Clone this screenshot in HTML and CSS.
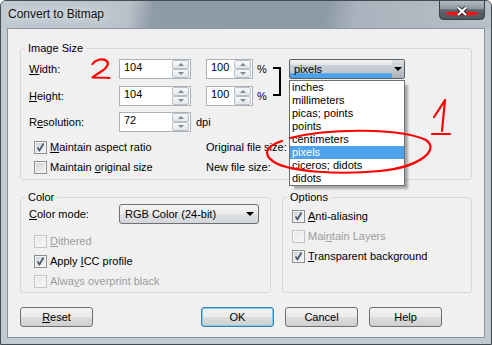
FILE: index.html
```html
<!DOCTYPE html>
<html lang="en">
  <head>
    <meta charset="UTF-8" />
    <title>Convert to Bitmap</title>
    <link rel="stylesheet" href="styles.css">
  </head>
  <body>
    <div class="window">
      <div class="titlebar">
        <span class="title">Convert to Bitmap</span>
        <span class="close">
          <svg width="46" height="19" viewBox="0 0 46 19">
            <defs>
              <linearGradient id="closeBg" x1="0" y1="0" x2="0" y2="1">
                <stop offset="0" stop-color="#b4bbc2" />
                <stop offset="0.42" stop-color="#8d959d" />
                <stop offset="0.48" stop-color="#5d656d" />
                <stop offset="1" stop-color="#4c545c" />
              </linearGradient>
            </defs>
            <path d="M0.5 0 V14.5 Q0.5 18.5 4.5 18.5 H41.5 Q45.5 18.5 45.5 14.5 V0" fill="url(#closeBg)" stroke="#39414a" />
            <ellipse cx="23" cy="12.5" rx="17" ry="2" fill="#ff1010" />
            <path d="M19 6.5 L27 14 M27 6.5 L19 14" stroke="#2a3036" stroke-width="4" />
            <path d="M19 6.5 L27 14 M27 6.5 L19 14" stroke="#ffffff" stroke-width="2.2" />
          </svg>
        </span>
      </div>

      <div class="client">
        <fieldset class="group size-group">
          <legend>Image Size</legend>
          <div class="size-grid">
            <span class="lbl"><u>W</u>idth:</span>
            <span class="spin w-num"><span class="val">104</span><span class="arrows"><i class="up"></i><i class="down"></i></span></span>
            <span class="spin w-pct"><span class="val">100</span><span class="arrows"><i class="up"></i><i class="down"></i></span></span>
            <span class="pct">%</span>
            <span class="bracket"></span>
            <div class="combo">
              <span class="combo-text">pixels</span>
              <span class="combo-btn"></span>
              <ul class="droplist">
                <li>inches</li>
                <li>millimeters</li>
                <li>picas; points</li>
                <li>points</li>
                <li>centimeters</li>
                <li class="sel">pixels</li>
                <li>ciceros; didots</li>
                <li>didots</li>
              </ul>
            </div>

            <span class="lbl"><u>H</u>eight:</span>
            <span class="spin w-num"><span class="val">104</span><span class="arrows"><i class="up"></i><i class="down"></i></span></span>
            <span class="spin w-pct"><span class="val">100</span><span class="arrows"><i class="up"></i><i class="down"></i></span></span>
            <span class="pct">%</span>

            <span class="lbl">R<u>e</u>solution:</span>
            <span class="with-unit">
              <span class="spin w-num"><span class="val">72</span><span class="arrows"><i class="up"></i><i class="down"></i></span></span>
              <span>dpi</span>
            </span>
          </div>

          <div class="size-checks">
            <label class="check">
              <span class="box"><svg width="11" height="11" viewBox="0 0 11 11"><path d="M2.5 5.5 L4.5 8.5 L8.5 1.5" fill="none" stroke="#4a5766" stroke-width="1.7" /></svg></span>
              <span><u>M</u>aintain aspect ratio</span>
            </label>
            <span class="info">Original file size:</span>
            <label class="check">
              <span class="box"></span>
              <span>Maintain <u>o</u>riginal size</span>
            </label>
            <span class="info">New file size:</span>
          </div>
        </fieldset>

        <div class="lower">
          <fieldset class="group color-group">
            <legend>Color</legend>
            <div class="mode-row">
              <span class="mode-lbl"><u>C</u>olor mode:</span>
              <span class="select">
                <span class="select-text">RGB Color (24-bit)</span>
                <span class="select-arrow"></span>
              </span>
            </div>
            <div class="color-checks">
              <label class="check off">
                <span class="box"></span>
                <span><u>D</u>ithered</span>
              </label>
              <label class="check">
                <span class="box"><svg width="11" height="11" viewBox="0 0 11 11"><path d="M2.5 5.5 L4.5 8.5 L8.5 1.5" fill="none" stroke="#4a5766" stroke-width="1.7" /></svg></span>
                <span>Apply <u>I</u>CC profile</span>
              </label>
              <label class="check off">
                <span class="box"></span>
                <span>Alwa<u>y</u>s overprint black</span>
              </label>
            </div>
          </fieldset>

          <fieldset class="group options-group">
            <legend>Options</legend>
            <div class="option-checks">
              <label class="check">
                <span class="box"><svg width="11" height="11" viewBox="0 0 11 11"><path d="M2.5 5.5 L4.5 8.5 L8.5 1.5" fill="none" stroke="#4a5766" stroke-width="1.7" /></svg></span>
                <span><u>A</u>nti-aliasing</span>
              </label>
              <label class="check off">
                <span class="box"></span>
                <span>Mai<u>n</u>tain Layers</span>
              </label>
              <label class="check">
                <span class="box"><svg width="11" height="11" viewBox="0 0 11 11"><path d="M2.5 5.5 L4.5 8.5 L8.5 1.5" fill="none" stroke="#4a5766" stroke-width="1.7" /></svg></span>
                <span><u>T</u>ransparent background</span>
              </label>
            </div>
          </fieldset>
        </div>

        <div class="buttons">
          <button class="btn"><u>R</u>eset</button>
          <button class="btn default">OK</button>
          <button class="btn">Cancel</button>
          <button class="btn">Help</button>
        </div>
      </div>

      <!-- red notes drawn over the dialog -->
      <svg class="marks" width="492" height="345" viewBox="0 0 492 345">
        <g fill="none" stroke="#ff0000" stroke-width="2.2" stroke-linecap="round" stroke-linejoin="round">
          <path d="M92.5 64 C95 60, 102 58, 106 60.5 C110 63, 107 68, 102 71 C98 73.5, 94 76, 92.5 77.5 C98 77.5, 104 77.5, 109.5 78" />
          <path d="M434 117 C438 111, 442 105, 445 100 C444 110, 443 120, 442 131" />
          <path d="M432 134 H450" />
          <path d="M290 138 C330 128, 400 128, 426 140 C440 150, 420 167, 380 171 C340 175, 290 172, 274 162 C262 154, 266 146, 282 141" />
        </g>
      </svg>
    </div>
  </body>
</html>
```

FILE: styles.css
```css
* {
  box-sizing: border-box;
}
body {
  margin: 0;
  font-family: "Liberation Sans", Arial, sans-serif;
  font-size: 11px;
  color: #000000;
  background: #ffffff;
}
.window {
  position: relative;
  width: 492px;
  height: 345px;
  background: #c1cad2;
  border: 1px solid #434b53;
  border-radius: 6px 6px 0 0;
  overflow: hidden;
}
.titlebar {
  display: flex;
  align-items: flex-start;
  height: 27px;
  background: linear-gradient(100deg, #c0c9d1 0, #bac3cb 26%, #8f9ba7 31%, #8d99a5 66%, #a8b3bd 72%, #b6c0c8 100%);
}
.title {
  padding-left: 7px;
  line-height: 27px;
  font-size: 12px;
  color: #111111;
  text-shadow: 0 0 6px #e4e9ed, 0 0 10px #e4e9ed;
}
.close {
  margin-left: auto;
  margin-right: 6px;
  width: 46px;
  height: 19px;
}
.close svg {
  display: block;
}
.client {
  height: 310px;
  margin: 0 6px;
  padding: 13px 0 0 12px;
  background: #f0f0f0;
  border: 1px solid #8894a0;
}

/* group boxes */
.group {
  margin: 0;
  padding: 0 0 0 8px;
  border: 1px solid #d5d9dd;
  border-radius: 3px;
  min-width: 0;
}
.group legend {
  margin-left: -4px;
  padding: 0 3px;
  line-height: 13px;
}
.size-group {
  width: 452px;
  height: 138px;
  padding-top: 4px;
}
.size-grid {
  display: grid;
  grid-template-columns: 90px 87px 51px 16px 16px 116px;
  grid-template-rows: 27px 26px 20px;
  align-items: start;
}
.size-grid .lbl {
  grid-column: 1;
  line-height: 20px;
}
.pct {
  line-height: 20px;
}
.bracket {
  grid-column: 5;
  grid-row: 1 / 3;
  width: 8px;
  height: 29px;
  margin-top: 8px;
  border: 2px solid #000000;
  border-left: 0;
}
.with-unit {
  grid-column: 2 / 5;
  display: flex;
  align-items: center;
  gap: 5px;
  line-height: 20px;
}

/* spin boxes */
.spin {
  display: flex;
  height: 20px;
  background: #ffffff;
  border: 1px solid #abb2b9;
}
.w-num {
  width: 72px;
}
.w-pct {
  width: 47px;
}
.val {
  flex: 1;
  padding-left: 4px;
  line-height: 15px;
}
.arrows {
  display: flex;
  flex-direction: column;
  width: 17px;
  margin-right: 1px;
}
.arrows i {
  flex: 1;
  display: flex;
  align-items: center;
  justify-content: center;
  border: 1px solid #b9c0c6;
  border-radius: 2px;
  background: linear-gradient(#f7f8f9, #e3e6e9);
}
.arrows i::after {
  content: "";
  border-left: 3px solid transparent;
  border-right: 3px solid transparent;
}
.arrows .up::after {
  border-bottom: 3px solid #7d8892;
}
.arrows .down::after {
  border-top: 3px solid #7d8892;
}

/* unit combo, open */
.combo {
  position: relative;
  display: flex;
  width: 116px;
  height: 20px;
  border: 1px solid #5b6066;
  border-radius: 2px;
  background: linear-gradient(#f4f5f6 0, #e4e7ea 25%, #c8cfd5 30%, #bfc7ce 72%, #4aa2ee 76%, #4aa2ee 100%);
}
.combo-text {
  flex: 1;
  padding-left: 4px;
  line-height: 18px;
}
.combo-btn {
  width: 12px;
  display: flex;
  align-items: center;
  justify-content: center;
  background: linear-gradient(#dfe2e5, #a9b0b6);
}
.combo-btn::after {
  content: "";
  border-left: 4px solid transparent;
  border-right: 4px solid transparent;
  border-top: 4px solid #000000;
}
.droplist {
  position: absolute;
  top: 20px;
  left: -1px;
  width: 116px;
  margin: 0;
  padding: 0;
  list-style: none;
  background: #ffffff;
  border: 1px solid #6e6e6e;
  box-shadow: 4px 4px 2px -1px rgba(0, 0, 0, 0.3);
  z-index: 2;
}
.droplist li {
  line-height: 13px;
  padding-left: 2px;
}
.droplist .sel {
  background: #4da2ec;
  color: #ffffff;
}

/* check boxes */
.size-checks {
  display: grid;
  grid-template-columns: 172px auto;
  grid-auto-rows: 20px;
  margin: 5px 0 0 5px;
}
.info {
  line-height: 20px;
}
.check {
  display: flex;
  align-items: center;
  gap: 3px;
  height: 20px;
  line-height: 20px;
}
.box {
  width: 13px;
  height: 13px;
  padding: 0;
  border: 1px solid #8e8f8f;
  background: linear-gradient(135deg, #cdd2d7 0, #f6f7f8 100%);
  box-shadow: inset 0 0 0 1px #f4f4f4;
}
.box svg {
  display: block;
}
.off {
  color: #9c9c9c;
}
.off .box {
  border-color: #c4c6c8;
  background: linear-gradient(135deg, #e6e7e8 0, #f8f8f8 100%);
}

/* lower groups */
.lower {
  display: flex;
  gap: 11px;
  margin-top: 11px;
}
.color-group {
  width: 251px;
  height: 102px;
}
.mode-row {
  display: flex;
  align-items: center;
}
.mode-lbl {
  width: 90px;
  line-height: 20px;
}
.select {
  display: flex;
  width: 140px;
  height: 20px;
  border: 1px solid #707070;
  border-radius: 3px;
  background: linear-gradient(#f3f3f3 0, #ececec 50%, #dfe1e3 51%, #d3d6d9 100%);
}
.select-text {
  flex: 1;
  padding-left: 5px;
  line-height: 18px;
}
.select-arrow {
  width: 16px;
  display: flex;
  align-items: center;
  justify-content: center;
}
.select-arrow::after {
  content: "";
  border-left: 4px solid transparent;
  border-right: 4px solid transparent;
  border-top: 4px solid #000000;
}
.color-checks {
  margin: 7px 0 0 5px;
}
.options-group {
  width: 190px;
  height: 102px;
  padding-top: 2px;
}
.option-checks {
  margin-left: 1px;
}

/* dialog buttons */
.buttons {
  display: flex;
  gap: 11px;
  margin-top: 14px;
}
.btn {
  width: 73px;
  height: 20px;
  padding: 0;
  font: inherit;
  color: #000000;
  line-height: 18px;
  border: 1px solid #707070;
  border-radius: 3px;
  background: linear-gradient(#f2f2f2 0, #ebebeb 50%, #dddddd 51%, #cfcfcf 100%);
}
.btn.default {
  margin-left: 97px;
  border-color: #3c7fb1;
  box-shadow: inset 0 0 0 1px #7fcaf5;
}

.marks {
  position: absolute;
  top: -1px;
  left: -1px;
  pointer-events: none;
  z-index: 5;
}
```
